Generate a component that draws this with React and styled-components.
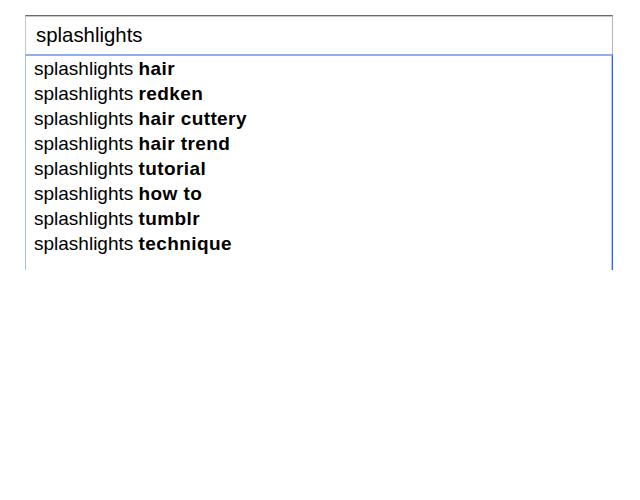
import React from "react";
import styled, { createGlobalStyle } from "styled-components";

const Global = createGlobalStyle`
  html, body { margin: 0; padding: 0; background: #fff; }
  body { font-family: "Liberation Sans", Arial, sans-serif; color: #000; }
`;

const Page = styled.div`
  padding: 15px 0 0 25px;
`;

const Widget = styled.div`
  width: 588px;
  display: flex;
  flex-direction: column;
`;

const SearchBox = styled.div`
  height: 37px;
  border-top: 1px solid #6a6a6a;
  border-left: 1px solid #c6c6c6;
  border-right: 1px solid #b4b4b4;
  box-shadow: inset 0 1px 0 #c8c8c8;
  display: flex;
  align-items: center;
  padding: 0 0 1px 10px;
  box-sizing: content-box;
  font-size: 20.4px;
  line-height: 24px;
`;

const Dropdown = styled.ul`
  list-style: none;
  margin: 0;
  padding: 0 0 14px 8px;
  border-top: 2px solid #8fb0ec;
  border-left: 1px solid #a3bff0;
  border-right: 1px solid #2f66e0;
  box-shadow: inset -1px 0 0 #b3cbf3;
`;

const Suggestion = styled.li`
  height: 25px;
  line-height: 25px;
  font-size: 19px;
  white-space: nowrap;
`;

const Completion = styled.b`
  font-weight: bold;
  letter-spacing: 0.4px;
`;

const query = "splashlights";
const completions = [
  "hair",
  "redken",
  "hair cuttery",
  "hair trend",
  "tutorial",
  "how to",
  "tumblr",
  "technique",
];

export default function App() {
  return (
    <Page>
      <Global />
      <Widget>
        <SearchBox>{query}</SearchBox>
        <Dropdown>
          {completions.map((c) => (
            <Suggestion key={c}>
              {query} <Completion>{c}</Completion>
            </Suggestion>
          ))}
        </Dropdown>
      </Widget>
    </Page>
  );
}
